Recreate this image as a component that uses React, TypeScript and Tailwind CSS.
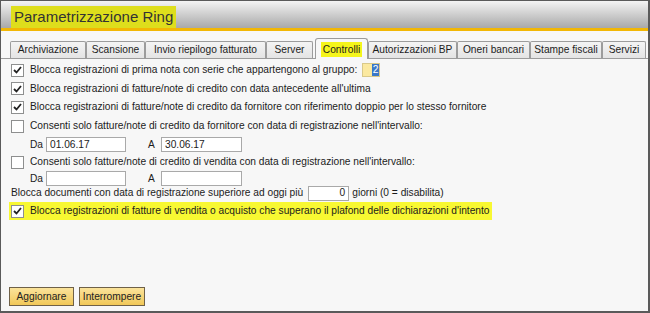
import type { ReactNode } from 'react';

const font = { fontFamily: '"Liberation Sans", Arial, sans-serif' };

function Spunta({ checked }: { checked: boolean }) {
  return (
    <span className="grid h-[13px] w-[13px] shrink-0 place-items-center border border-[#8e8f8f] bg-white">
      {checked && (
        <svg width="9" height="8" viewBox="0 0 9 8">
          <path d="M1 4 L3.5 6.5 L8 1" fill="none" stroke="#222" strokeWidth="1.8" />
        </svg>
      )}
    </span>
  );
}

function Riga({ checked, children, h }: { checked: boolean; children: ReactNode; h: string }) {
  return (
    <div className={`flex items-center gap-[6px] pl-[10px] ${h}`}>
      <Spunta checked={checked} />
      <span>{children}</span>
    </div>
  );
}

function Campo({ value, className = '' }: { value?: string; className?: string }) {
  return (
    <span className={`flex h-[15px] items-center border border-[#a9a9a9] bg-white px-[3px] ${className}`}>
      {value}
    </span>
  );
}

function RigaDate({ da, a, h }: { da?: string; a?: string; h: string }) {
  return (
    <div className={`flex items-center pl-[29px] ${h}`}>
      <span className="w-[16px]">Da</span>
      <Campo value={da} className="w-[80px]" />
      <span className="ml-[22px] w-[13px]">A</span>
      <Campo value={a} className="w-[81px]" />
    </div>
  );
}

const schede = [
  { titolo: 'Archiviazione', w: 'w-[76px]' },
  { titolo: 'Scansione', w: 'w-[59px]' },
  { titolo: 'Invio riepilogo fatturato', w: 'w-[121px]' },
  { titolo: 'Server', w: 'w-[47px]' },
  { titolo: 'Controlli', w: 'w-[53px]', attiva: true },
  { titolo: 'Autorizzazioni BP', w: 'w-[89px]' },
  { titolo: 'Oneri bancari', w: 'w-[73px]' },
  { titolo: 'Stampe fiscali', w: 'w-[72px]' },
  { titolo: 'Servizi', w: 'w-[44px]' },
];

export default function App() {
  return (
    <div
      className="flex h-[313px] w-[650px] flex-col overflow-hidden border border-r-2 border-b-2 border-[#5a5a5a] bg-[#f7f7f7] text-[10.2px] text-[#1c1c1c]"
      style={font}
    >
      {/* Kopfzeile */}
      <div className="flex h-[27px] items-end bg-gradient-to-b from-[#f4f4f4] to-[#a9a9a9] pl-[10px]">
        <span className="mb-[-1px] bg-[#dede1c] px-[3px] pb-[1px] text-[15px] leading-[22px] text-[#333]">
          Parametrizzazione Ring
        </span>
      </div>
      <div className="h-[3px] bg-[#f2b705]" />

      {/* Schede */}
      <div className="mt-[8px] flex h-[20px] items-end border-b border-[#9c9c9c] pl-[9px]">
        {schede.map((s) =>
          s.attiva ? (
            <div
              key={s.titolo}
              className={`ml-[2px] mb-[-1px] flex h-[21px] items-center justify-center rounded-t-[3px] border border-b-0 border-[#9c9c9c] bg-[#f7f7f7] ${s.w}`}
            >
              <span className="bg-[#f5f51a] px-[2px] leading-[15px]">{s.titolo}</span>
            </div>
          ) : (
            <div
              key={s.titolo}
              className={`flex h-[17px] shrink-0 items-center justify-center rounded-t-[2px] border border-b-0 border-[#9c9c9c] bg-gradient-to-b from-[#f4f4f4] to-[#e4e4e4] ${s.w}`}
            >
              {s.titolo}
            </div>
          ),
        )}
      </div>

      {/* Inhalt */}
      <div className="flex flex-col pt-[2px]">
        <Riga checked h="h-[18px]">
          <span className="flex items-center">
            Blocca registrazioni di prima nota con serie che appartengono al gruppo:
            <span className="ml-[5px] flex h-[14px] w-[18px] items-center justify-end border border-[#d9c98a] bg-[#fbe9a0]">
              <span className="bg-[#3a78c8] px-[1px] leading-[12px] text-white">2</span>
            </span>
          </span>
        </Riga>
        <Riga checked h="h-[19px]">
          Blocca registrazioni di fatture/note di credito con data antecedente all'ultima
        </Riga>
        <Riga checked h="h-[18px]">
          Blocca registrazioni di fatture/note di credito da fornitore con riferimento doppio per lo stesso fornitore
        </Riga>
        <Riga checked={false} h="h-[20px]">
          Consenti solo fatture/note di credito da fornitore con data di registrazione nell'intervallo:
        </Riga>
        <RigaDate da="01.06.17" a="30.06.17" h="h-[17px]" />
        <Riga checked={false} h="h-[18px]">
          Consenti solo fatture/note di credito di vendita con data di registrazione nell'intervallo:
        </Riga>
        <RigaDate h="h-[15px]" />
        <div className="flex h-[14px] items-center pl-[10px]">
          <span>Blocca documenti con data di registrazione superiore ad oggi più</span>
          <Campo value="0" className="ml-[5px] w-[41px] justify-end" />
          <span className="ml-[3px]">giorni (0 = disabilita)</span>
        </div>
        <div className="mt-[2px] flex pl-[8px]">
          <div className="flex h-[18px] items-center gap-[6px] bg-[#f8f832] pl-[2px] pr-[2px]">
            <Spunta checked />
            <span>
              Blocca registrazioni di fatture di vendita o acquisto che superano il plafond delle dichiarazioni d'intento
            </span>
          </div>
        </div>
      </div>

      {/* Schaltflaechen */}
      <div className="mt-auto mb-[5px] flex gap-[5px] pl-[8px]">
        <button className="h-[19px] w-[65px] border border-[#6f6148] bg-gradient-to-b from-[#fbe39a] to-[#f1c857] text-[10.2px] text-[#222]">
          Aggiornare
        </button>
        <button className="h-[19px] w-[66px] border border-[#6f6148] bg-gradient-to-b from-[#fbe39a] to-[#f1c857] text-[10.2px] text-[#222]">
          Interrompere
        </button>
      </div>
    </div>
  );
}
